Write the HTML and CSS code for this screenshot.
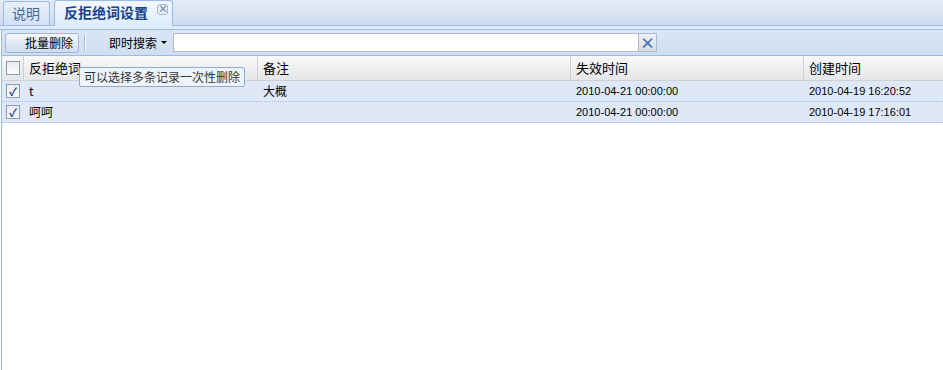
FILE: index.html
```html
<!DOCTYPE html>
<html lang="zh">
<head>
    <meta charset="UTF-8">
    <title>反拒绝词设置</title>
    <link rel="stylesheet" href="styles.css">
</head>
<body>
    <!-- Tab-Leiste -->
    <div class="tabbar">
        <div class="tab">说明</div>
        <div class="tab active">反拒绝词设置<span class="tab-close">&#215;</span></div>
    </div>
    <div class="tabline"></div>

    <div class="panel">
        <!-- Toolbar -->
        <div class="toolbar">
            <button class="tbtn">批量删除</button>
            <span class="tsep"></span>
            <span class="search-label">即时搜索 <span class="arrow"></span></span>
            <div class="search">
                <input type="text">
                <span class="clear">&#215;</span>
            </div>
        </div>

        <!-- Grid -->
        <div class="grid">
            <div class="row head">
                <div class="cell chk"><span class="cb"></span></div>
                <div class="cell c1">反拒绝词</div>
                <div class="cell c2">备注</div>
                <div class="cell c3">失效时间</div>
                <div class="cell c4">创建时间</div>
            </div>
            <div class="row sel">
                <div class="cell chk"><span class="cb on">&#10003;</span></div>
                <div class="cell c1">t</div>
                <div class="cell c2">大概</div>
                <div class="cell c3 num">2010-04-21 00:00:00</div>
                <div class="cell c4 num">2010-04-19 16:20:52</div>
            </div>
            <div class="row sel">
                <div class="cell chk"><span class="cb on">&#10003;</span></div>
                <div class="cell c1">呵呵</div>
                <div class="cell c2"></div>
                <div class="cell c3 num">2010-04-21 00:00:00</div>
                <div class="cell c4 num">2010-04-19 17:16:01</div>
            </div>
            <div class="tip">可以选择多条记录一次性删除</div>
        </div>
    </div>
</body>
</html>
```

FILE: styles.css
```css
body {
    margin: 0;
    font-family: "Noto Sans CJK SC", "Liberation Sans", sans-serif;
    font-size: 12px;
    color: #000;
    background: #fff;
    height: 370px;
    overflow: hidden;
}
.tabbar {
    display: flex;
    align-items: flex-end;
    gap: 4px;
    height: 25px;
    padding-left: 3px;
    background: linear-gradient(#e3ebf7, #cfdcee);
}
.tab {
    height: 23px;
    line-height: 22px;
    padding: 0 9px 0 8px;
    font-size: 14px;
    color: #416aa3;
    border: 1px solid #99bbe8;
    border-bottom: none;
    border-radius: 3px 3px 0 0;
    background: linear-gradient(#e9eff8, #d5e1f2);
}
.tab.active {
    position: relative;
    height: 25px;
    margin-bottom: -1px;
    padding: 0 24px 0 9px;
    font-weight: bold;
    color: #15428b;
    background: linear-gradient(#f3f7fc, #deecfd);
}
.tab-close {
    position: absolute;
    right: 4px;
    top: 3px;
    width: 9px;
    height: 9px;
    line-height: 8px;
    font-size: 10px;
    text-align: center;
    color: #6f86b0;
    border: 1px solid #a4b5d0;
    border-radius: 3px;
    background: #e6edf7;
}
.tabline {
    height: 3px;
    background: #deecfd;
    border-top: 1px solid #99bbe8;
    border-bottom: 1px solid #99bbe8;
}
.panel {
    margin-left: 1px;
    border-left: 1px solid #99bbe8;
    height: 340px;
}
.toolbar {
    display: flex;
    align-items: center;
    height: 25px;
    padding-left: 3px;
    background: linear-gradient(#dbe6f4, #d0def0);
    border-bottom: 1px solid #99bbe8;
}
.tbtn {
    width: 74px;
    height: 20px;
    padding: 0 0 0 14px;
    font-family: inherit;
    font-size: 12px;
    color: #000;
    border: 1px solid #9fb6d8;
    border-radius: 3px;
    background: linear-gradient(#f5f8fc 0%, #e2eaf5 50%, #cddcef 100%);
}
.tsep {
    width: 1px;
    height: 16px;
    margin: 0 7px 0 5px;
    background: #a8bcd8;
    border-right: 1px solid #fff;
}
.search-label {
    margin-left: 16px;
    margin-right: 6px;
    display: flex;
    align-items: center;
    gap: 4px;
}
.arrow {
    width: 0;
    height: 0;
    border-left: 3px solid transparent;
    border-right: 3px solid transparent;
    border-top: 3px solid #000;
}
.search {
    display: flex;
    height: 19px;
}
.search input {
    width: 466px;
    height: 19px;
    box-sizing: border-box;
    margin: 0;
    padding: 0 3px;
    border: 1px solid #b5b8c8;
    background: #fff;
}
.clear {
    width: 18px;
    height: 19px;
    box-sizing: border-box;
    line-height: 17px;
    text-align: center;
    font-size: 15px;
    font-weight: bold;
    color: #3c6fb4;
    border: 1px solid #b5b8c8;
    border-left: none;
    background: linear-gradient(#eef1f6, #d7dce6);
}
.grid {
    position: relative;
}
.row {
    display: flex;
    height: 20px;
    line-height: 20px;
}
.row.head {
    height: 24px;
    line-height: 24px;
    background: linear-gradient(#f9f9f9, #e5e6e8);
    border-bottom: 1px solid #d0d0d0;
}
.row.sel {
    background: #dfe8f6;
    border-bottom: 1px dotted #a3bae9;
}
.cell {
    box-sizing: border-box;
    padding-left: 5px;
    white-space: nowrap;
    overflow: hidden;
}
.head .cell {
    font-size: 13px;
    border-right: 1px solid #d0d0d0;
}
.chk {
    width: 22px;
    padding-left: 4px;
    display: flex;
    align-items: center;
}
.c1 { width: 234px; }
.c2 { width: 313px; }
.c3 { width: 233px; }
.c4 { flex: 1; }
.head .c4 { border-right: none; }
.num {
    font-family: "Liberation Sans", sans-serif;
    font-size: 11px;
}
.cb {
    width: 12px;
    height: 12px;
    border: 1px solid #8a9bb3;
    background: linear-gradient(#e9ecf0, #fbfbfb);
    font-size: 11px;
    line-height: 12px;
    font-weight: bold;
    color: #1f3f9a;
    text-align: center;
}
.tip {
    position: absolute;
    left: 77px;
    top: 11px;
    padding: 0 4px;
    height: 18px;
    line-height: 18px;
    font-size: 12px;
    color: #333;
    background: #eef4fc;
    border: 1px solid #8eaace;
    border-radius: 2px;
}
```
